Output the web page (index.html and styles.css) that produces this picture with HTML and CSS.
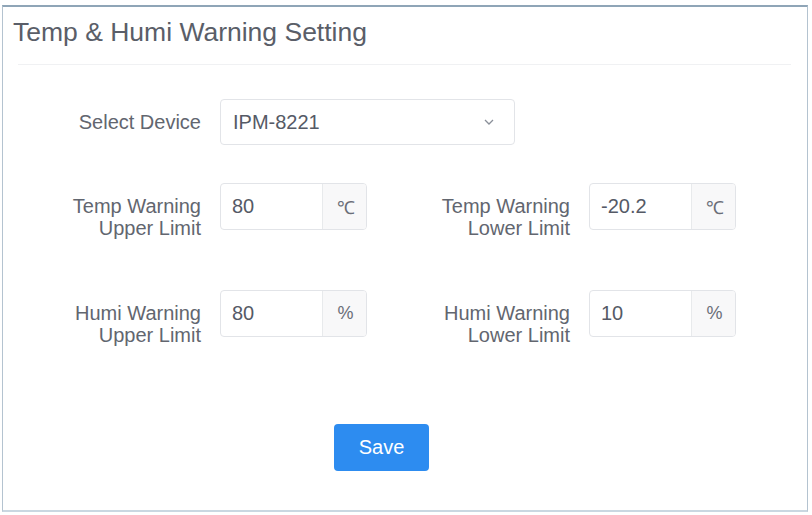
FILE: index.html
```html
<!DOCTYPE html>
<html lang="en">
<head>
  <meta charset="UTF-8">
  <title>Temp &amp; Humi Warning Setting</title>
  <link rel="stylesheet" href="styles.css">
</head>
<body>

  <div class="panel">
    <div class="panel-head">
      <h1>Temp &amp; Humi Warning Setting</h1>
    </div>

    <form class="form">
      <div class="row row-device">
        <label class="lbl">Select Device</label>
        <div class="select">
          <span>IPM-8221</span>
          <svg width="10" height="6" viewBox="0 0 10 6"><path d="M1 1l4 4 4-4" fill="none" stroke="#8a8f99" stroke-width="1.3"/></svg>
        </div>
      </div>

      <div class="row row-temp">
        <label class="lbl">Temp Warning<br>Upper Limit</label>
        <div class="group"><span class="val">80</span><span class="addon">℃</span></div>
        <label class="lbl">Temp Warning<br>Lower Limit</label>
        <div class="group"><span class="val">-20.2</span><span class="addon">℃</span></div>
      </div>

      <div class="row row-humi">
        <label class="lbl">Humi Warning<br>Upper Limit</label>
        <div class="group"><span class="val">80</span><span class="addon">%</span></div>
        <label class="lbl">Humi Warning<br>Lower Limit</label>
        <div class="group"><span class="val">10</span><span class="addon">%</span></div>
      </div>

      <div class="actions">
        <button type="button" class="btn">Save</button>
      </div>
    </form>
  </div>

</body>
</html>
```

FILE: styles.css
```css
body {
  margin: 0;
  font-family: 'Liberation Sans', Arial, sans-serif;
  background: #fff;
  color: #5c6170;
}

.panel {
  margin: 5px 0 0 2px;
  width: 806px;
  height: 507px;
  box-sizing: border-box;
  border: 1px solid #b4c3d0;
  border-top: 2px solid #8fa5b7;
  border-bottom: 2px solid #cad7e1;
}

.panel-head {
  margin: 0 16px 0 15px;
  height: 58px;
  border-bottom: 1px solid #f0f1f3;
  box-sizing: border-box;
}

.panel-head h1 {
  margin: 0 0 0 -5px;
  padding: 10px 0 0 0;
  font-size: 26.5px;
  font-weight: normal;
  color: #5a5e68;
  line-height: 30px;
}

.form {
  padding: 34px 0 0 48px;
}

.row {
  display: grid;
  grid-template-columns: 150px 147px 184px 147px;
  column-gap: 19px;
  align-items: start;
}

.row-device { margin-bottom: 38px; }
.row-temp { margin-bottom: 51px; }

.lbl {
  text-align: right;
  font-size: 20px;
  line-height: 22px;
  padding-top: 12px;
  color: #62666f;
}

.select {
  grid-column: 2 / 5;
  width: 295px;
  height: 46px;
  box-sizing: border-box;
  border: 1px solid #e2e4e8;
  border-radius: 4px;
  display: flex;
  align-items: center;
  justify-content: space-between;
  padding: 0 20px 0 12px;
  font-size: 20px;
  color: #555a66;
}

.group {
  display: flex;
  height: 47px;
  box-sizing: border-box;
  border: 1px solid #e2e4e8;
  border-radius: 4px;
  overflow: hidden;
}

.val {
  flex: 1;
  display: flex;
  align-items: center;
  padding-left: 11px;
  font-size: 20px;
  color: #555a66;
}

.addon {
  width: 43px;
  background: #f8f8f9;
  border-left: 1px solid #e8eaec;
  display: flex;
  align-items: center;
  justify-content: center;
  font-size: 18px;
  color: #6a6e78;
  letter-spacing: -2px;
}

.actions {
  margin-top: 78px;
  padding-left: 283px;
}

.btn {
  width: 95px;
  height: 47px;
  border: none;
  border-radius: 4px;
  background: #2d8cf0;
  color: #fff;
  font-family: 'Liberation Sans', Arial, sans-serif;
  font-size: 20px;
  cursor: pointer;
}
```
